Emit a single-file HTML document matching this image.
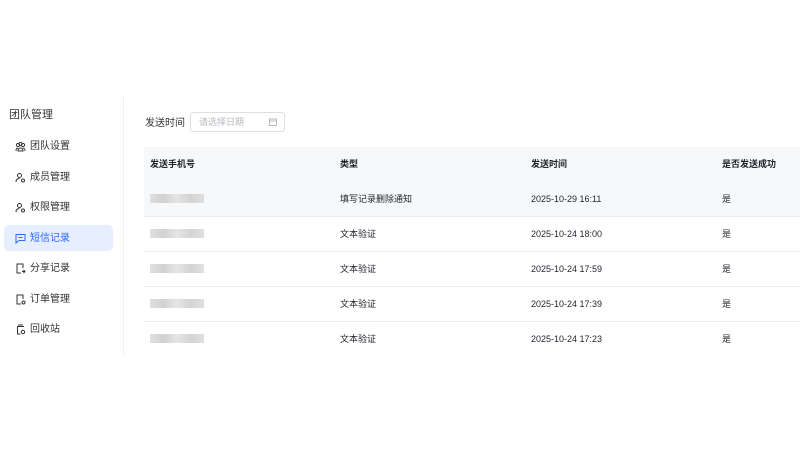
<!DOCTYPE html>
<html><head><meta charset="utf-8"><style>
body{margin:0;width:800px;height:450px;background:#fff;font-family:"Liberation Sans","Noto Sans CJK SC",sans-serif;color:#1f2329;position:relative;overflow:hidden}
.a{position:absolute}
.side{left:123px;top:97px;width:1px;height:258px;background:#eef0f3}
.t{left:9px;top:106px;font-size:11px;color:#333}
.mi{position:absolute;left:4px;width:109px;height:26px;border-radius:5px;font-size:10px;color:#333;line-height:26px}
.mi span{position:absolute;left:26px;top:1px}
.mi svg{position:absolute;left:11px;top:8px}
.act{background:#e6eeff;color:#2f6bff}
.row{position:absolute;left:144px;width:656px;height:34px;font-size:9px;line-height:34px;border-bottom:1px solid #eceef1}
.row div{position:absolute}
.blur{top:12px;width:54px;height:9px;background:linear-gradient(90deg,#ddd,#ccc,#e3e3e3,#cfcfcf,#ddd);opacity:.9}
</style></head><body>
<div class="a side"></div>
<div class="a t">团队管理</div>
<div class="mi" style="top:133px"><svg width="11" height="11" viewBox="0 0 11 11" fill="none" stroke="#333" stroke-width="1"><circle cx="3" cy="4" r="1.6"/><circle cx="8" cy="4" r="1.6"/><circle cx="5.5" cy="3" r="1.6"/><path d="M1 10c0-2 1-3 2-3M10 10c0-2-1-3-2-3M3 10c0-2 1-3 2.5-3s2.5 1 2.5 3z"/></svg><span>团队设置</span></div>
<div class="mi" style="top:164px"><svg width="11" height="11" viewBox="0 0 11 11" fill="none" stroke="#333"><circle cx="4.5" cy="3.5" r="2"/><path d="M1 10c0-2.5 1.5-3.5 3.5-3.5"/><circle cx="8" cy="8.5" r="1.5"/></svg><span>成员管理</span></div>
<div class="mi" style="top:194px"><svg width="11" height="11" viewBox="0 0 11 11" fill="none" stroke="#333"><circle cx="4.5" cy="3.5" r="2"/><path d="M1 10c0-2.5 1.5-3.5 3.5-3.5"/><circle cx="8" cy="8.5" r="1.5"/></svg><span>权限管理</span></div>
<div class="mi act" style="top:225px"><svg width="11" height="11" viewBox="0 0 11 11" fill="none" stroke="#2f6bff"><path d="M1 1.5h9v6H4l-3 2.5z"/><path d="M3.5 4.5h4"/></svg><span>短信记录</span></div>
<div class="mi" style="top:255px"><svg width="11" height="11" viewBox="0 0 11 11" fill="none" stroke="#333"><path d="M8 5V1H2v9h4M7 8.5h3M8.5 7l1.5 1.5L8.5 10"/></svg><span>分享记录</span></div>
<div class="mi" style="top:286px"><svg width="11" height="11" viewBox="0 0 11 11" fill="none" stroke="#333"><path d="M8 5V1H2v9h4"/><circle cx="8.5" cy="8.5" r="1.5"/></svg><span>订单管理</span></div>
<div class="mi" style="top:316px"><svg width="11" height="11" viewBox="0 0 11 11" fill="none" stroke="#333"><path d="M3 1h5M2 2.5h7M2.5 2.5V10h3"/><circle cx="8" cy="8" r="1.7"/></svg><span>回收站</span></div>
<div class="a" style="left:145px;top:114px;font-size:10px;color:#333">发送时间</div>
<div class="a" style="left:190px;top:112px;width:93px;height:18px;border:1px solid #dcdfe4;border-radius:3px;font-size:9px;color:#b5b8bd;line-height:18px;text-indent:8px">请选择日期
<svg style="position:absolute;right:7px;top:5px" width="8" height="8" viewBox="0 0 8 8" fill="none" stroke="#aaa" stroke-width=".8"><rect x=".5" y="1" width="7" height="6.5"/><path d="M.5 3h7"/></svg></div>
<div class="row" style="top:147px;height:35px;line-height:35px;background:#f7f8fa;border:0;font-weight:bold"><div style="left:6px">发送手机号</div><div style="left:196px">类型</div><div style="left:387px">发送时间</div><div style="left:578px">是否发送成功</div></div>
<div class="row" style="top:182px;background:#f7f8fa"><div class="blur" style="left:6px"></div><div style="left:196px">填写记录删除通知</div><div style="left:387px">2025-10-29 16:11</div><div style="left:578px">是</div></div>
<div class="row" style="top:217px"><div class="blur" style="left:6px"></div><div style="left:196px">文本验证</div><div style="left:387px">2025-10-24 18:00</div><div style="left:578px">是</div></div>
<div class="row" style="top:252px"><div class="blur" style="left:6px"></div><div style="left:196px">文本验证</div><div style="left:387px">2025-10-24 17:59</div><div style="left:578px">是</div></div>
<div class="row" style="top:287px"><div class="blur" style="left:6px"></div><div style="left:196px">文本验证</div><div style="left:387px">2025-10-24 17:39</div><div style="left:578px">是</div></div>
<div class="row" style="top:322px;border:0"><div class="blur" style="left:6px"></div><div style="left:196px">文本验证</div><div style="left:387px">2025-10-24 17:23</div><div style="left:578px">是</div></div>
</body></html>
